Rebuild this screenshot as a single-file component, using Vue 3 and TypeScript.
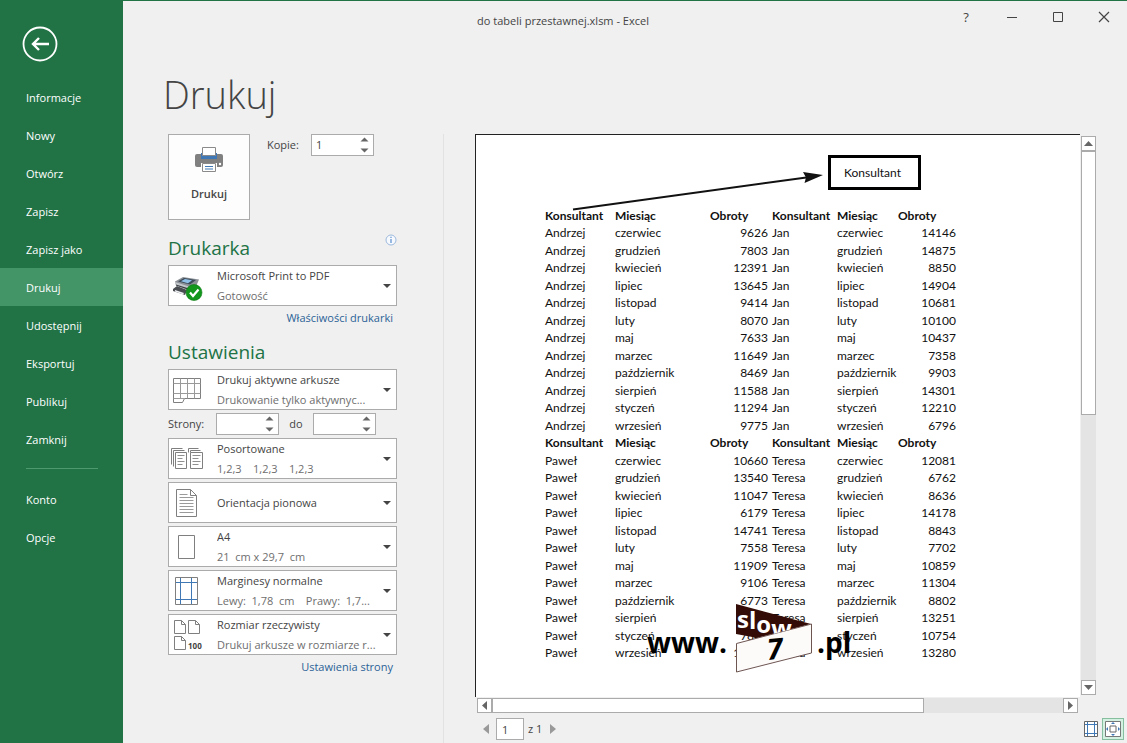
<script setup lang="ts">
import { ref } from 'vue'

type Row = [string, string, string, string, string, string]

const topNav = ['Informacje', 'Nowy', 'Otwórz', 'Zapisz', 'Zapisz jako', 'Drukuj', 'Udostępnij', 'Eksportuj', 'Publikuj', 'Zamknij']
const bottomNav = ['Konto', 'Opcje']
const active = ref('Drukuj')

const copies = ref('1')
const pageFrom = ref('')
const pageTo = ref('')
const currentPage = ref('1')

interface Combo {
  id: string
  label: string
  title: string
  sub: string
}

const sheetCombo: Combo = { id: 'sheets', label: 'Zakres wydruku', title: 'Drukuj aktywne arkusze', sub: 'Drukowanie tylko aktywnyc...' }
const layoutCombos: Combo[] = [
  { id: 'collate', label: 'Sortowanie', title: 'Posortowane', sub: '1,2,3    1,2,3    1,2,3' },
  { id: 'orient', label: 'Orientacja', title: 'Orientacja pionowa', sub: '' },
  { id: 'paper', label: 'Rozmiar papieru', title: 'A4', sub: '21  cm x 29,7  cm' },
  { id: 'margins', label: 'Marginesy', title: 'Marginesy normalne', sub: 'Lewy:  1,78  cm    Prawy:  1,7...' },
  { id: 'scale', label: 'Skalowanie', title: 'Rozmiar rzeczywisty', sub: 'Drukuj arkusze w rozmiarze r...' },
]

const months = ['czerwiec', 'grudzień', 'kwiecień', 'lipiec', 'listopad', 'luty', 'maj', 'marzec', 'październik', 'sierpień', 'styczeń', 'wrzesień']

function block(left: string, a: number[], right: string, b: number[]): Row[] {
  return months.map((m, i): Row => [left, m, String(a[i]), right, m, String(b[i])])
}

const blocks: Row[][] = [
  block('Andrzej', [9626, 7803, 12391, 13645, 9414, 8070, 7633, 11649, 8469, 11588, 11294, 9775],
    'Jan', [14146, 14875, 8850, 14904, 10681, 10100, 10437, 7358, 9903, 14301, 12210, 6796]),
  block('Paweł', [10660, 13540, 11047, 6179, 14741, 7558, 11909, 9106, 6773, 9120, 7845, 12043],
    'Teresa', [12081, 6762, 8636, 14178, 8843, 7702, 10859, 11304, 8802, 13251, 10754, 13280]),
]
const heads = ['Konsultant', 'Miesiąc', 'Obroty', 'Konsultant', 'Miesiąc', 'Obroty']
</script>

<template>
  <div class="app">
    <aside class="side">
      <button class="back" aria-label="Wstecz">
        <svg width="36" height="36" viewBox="0 0 36 36" fill="none" stroke="#fff">
          <circle cx="18" cy="18" r="16.5" stroke-width="1.8" />
          <path d="M27 18H11M17 12l-6 6 6 6" stroke-width="2.4" />
        </svg>
      </button>
      <nav>
        <button v-for="n in topNav" :key="n" class="nav" :class="{ on: n === active }" @click="active = n">{{ n }}</button>
        <hr class="rule" />
        <button v-for="n in bottomNav" :key="n" class="nav">{{ n }}</button>
      </nav>
    </aside>

    <main class="main">
      <header class="bar">
        <span class="doc">do tabeli przestawnej.xlsm - Excel</span>
        <div class="win">
          <button class="help" aria-label="Pomoc">?</button>
          <button aria-label="Minimalizuj"><svg width="12" height="12" viewBox="0 0 12 12"><path d="M1 6.5h10" stroke="#444" /></svg></button>
          <button aria-label="Maksymalizuj"><svg width="12" height="12" viewBox="0 0 12 12"><path d="M1.500 1.500h9v9h-9z" fill="none" stroke="#444" /></svg></button>
          <button aria-label="Zamknij"><svg width="12" height="12" viewBox="0 0 12 12"><path d="M1 1l10 10M11 1L1 11" stroke="#444" stroke-width="1.200" /></svg></button>
        </div>
      </header>

      <h1>Drukuj</h1>

      <div class="cols">
        <section class="settings">
          <div class="top">
            <button class="print">
              <svg width="30" height="26" viewBox="0 0 30 26">
                <path d="M3 7h24q2 0 2 2v9q0 2-2 2H3q-2 0-2-2V9q0-2 2-2z" fill="#808080" />
                <path d="M7 6h16v6H7z" fill="#3f78b5" />
                <path d="M8.500 .5h13v8h-13z" fill="#fff" stroke="#8a8a8a" />
                <path d="M7 16h16v10H7z" fill="#fff" />
                <path d="M8.500 16.500h13v8h-13z" fill="#fff" stroke="#8a8a8a" />
                <path d="M11 19.500h8M11 22h8" stroke="#3f78b5" stroke-width="1.200" />
                <circle cx="26" cy="17" r="1.200" fill="#fff" />
              </svg>
              <span>Drukuj</span>
            </button>
            <label class="copies" for="copies">Kopie:</label>
            <div class="spin">
              <input id="copies" v-model="copies" type="text" />
              <svg width="9" height="16" viewBox="0 0 9 16" fill="#666"><path d="M.5 4.500l4-4 4 4zM.5 11.500l4 4 4-4z" /></svg>
            </div>
          </div>

          <div class="head">
            <h2>Drukarka</h2>
            <svg width="12" height="12" viewBox="0 0 12 12"><circle cx="6" cy="6" r="5" fill="#f6f9fd" stroke="#9db9dd" /><path d="M6 5v4M6 2.800v1.200" stroke="#5b8fd0" stroke-width="1.200" /></svg>
          </div>

          <div class="combo">
            <svg class="ico" width="32" height="32" viewBox="0 0 32 32">
              <path d="M2 19l4-3 10 4-2 5-12-4z" fill="#4a4e52" />
              <path d="M4 20l9 3-1 1.500-8-3z" fill="#eef0f2" />
              <path d="M4 11.500L12 7l16 2.500-3 7-7 4-13-5z" fill="#8b9197" />
              <path d="M7 11.500l6-3.500 12 2-6 4.500z" fill="#3d4a57" />
              <path d="M10 11.300l4-2.300 7 1.200-4 3z" fill="#8fc0e8" />
              <path d="M4 12l14 4.500v3.500L5 15.500z" fill="#c3c8cc" />
              <path d="M5 14.500l13 4v1.500l-13-4.500z" fill="#3a3e42" />
              <circle cx="23" cy="22.500" r="8" fill="#12961b" stroke="#0b7a14" stroke-width=".6" />
              <path d="M19 22.500l3 3.500 5.500-6.500" fill="none" stroke="#fff" stroke-width="2.200" />
            </svg>
            <div class="txt">
              <select aria-label="Drukarka"><option>Microsoft Print to PDF</option></select>
              <span>Gotowość</span>
            </div>
            <svg class="arr" width="8" height="4" viewBox="0 0 8 4"><path d="M0 0h8L4 4z" fill="#444" /></svg>
          </div>
          <a class="link" href="#">Właściwości drukarki</a>

          <h2 class="second">Ustawienia</h2>

          <div class="combo">
            <svg class="ico" width="32" height="32" viewBox="0 0 32 32" fill="none" stroke="#7f7f7f">
              <path d="M2.500 4.500h27v20h-16l-2 4h-9z" fill="#fff" />
              <path d="M9.500 4.500v20M16.500 4.500v20M23.500 4.500v20M2.500 9.500h27M2.500 19.500h27M2.500 24.500h11" stroke="#9a9a9a" />
            </svg>
            <div class="txt">
              <select :aria-label="sheetCombo.label"><option>{{ sheetCombo.title }}</option></select>
              <span>{{ sheetCombo.sub }}</span>
            </div>
            <svg class="arr" width="8" height="4" viewBox="0 0 8 4"><path d="M0 0h8L4 4z" fill="#444" /></svg>
          </div>

          <div class="pages">
            <label for="from">Strony:</label>
            <div class="spin">
              <input id="from" v-model="pageFrom" type="text" />
              <svg width="9" height="16" viewBox="0 0 9 16" fill="#666"><path d="M.5 4.500l4-4 4 4zM.5 11.500l4 4 4-4z" /></svg>
            </div>
            <label class="to" for="to">do</label>
            <div class="spin">
              <input id="to" v-model="pageTo" type="text" />
              <svg width="9" height="16" viewBox="0 0 9 16" fill="#666"><path d="M.5 4.500l4-4 4 4zM.5 11.500l4 4 4-4z" /></svg>
            </div>
          </div>

          <div class="stack">
            <div v-for="c in layoutCombos" :key="c.id" class="combo">
              <svg class="ico" width="32" height="32" viewBox="0 0 32 32" fill="none" stroke="#7f7f7f">
                <template v-if="c.id === 'collate'">
                  <path d="M.5 21.500v-16h11M2.500 23.500v-16h11M17.500 9.500v-4h10M19.500 9.500v-2h10" />
                  <path d="M4.500 9.500h11v16h-11zM19.500 9.500h12v16h-12z" fill="#fff" />
                  <path d="M6.500 12.500h7M6.500 15.500h5M6.500 18.500h7M6.500 21.500h5M21.500 12.500h8M21.500 15.500h6M21.500 18.500h8M21.500 21.500h6" stroke="#909090" />
                </template>
                <template v-else-if="c.id === 'orient'">
                  <path d="M5.500 2.500h14l6 6v21h-20zM19.500 2.500v6h6" />
                  <path d="M8.500 7.500h8M8.500 10.500h14M8.500 13.500h14M8.500 16.500h14M8.500 19.500h14M8.500 22.500h14M8.500 25.500h14" stroke="#9a9a9a" />
                </template>
                <path v-else-if="c.id === 'paper'" d="M7.500 4.500h16v23h-16z" />
                <template v-else-if="c.id === 'margins'">
                  <path d="M4.500 2.500h22v27h-22z" />
                  <path d="M9.500 3v26M20.500 3v26M5 7.500h21M5 24.500h21" stroke="#3f78b5" />
                </template>
                <template v-else>
                  <path d="M3.500 1.500h7l4 4v9h-11zM10.500 1.500v4h4M17.500 1.500h7l4 4v9h-11zM24.500 1.500v4h4M3.500 17.500h7l4 4v9h-11zM10.500 17.500v4h4" />
                  <text x="17" y="30" class="hundred">100</text>
                </template>
              </svg>
              <div class="txt">
                <select :aria-label="c.label"><option>{{ c.title }}</option></select>
                <span v-if="c.sub">{{ c.sub }}</span>
              </div>
              <svg class="arr" width="8" height="4" viewBox="0 0 8 4"><path d="M0 0h8L4 4z" fill="#444" /></svg>
            </div>
          </div>
          <a class="link" href="#">Ustawienia strony</a>
        </section>

        <section class="preview">
          <div class="sheet">
            <svg class="shape arrow" width="252" height="42" viewBox="0 0 252 42">
              <path d="M1 38.500L238 6" stroke="#111" stroke-width="2" />
              <path d="M251 4L231 1l3 5.500-1.500 5.500z" fill="#111" />
            </svg>
            <div class="shape callout">Konsultant</div>
            <table>
              <colgroup>
                <col class="c1" /><col class="c2" /><col class="c3" /><col class="c4" /><col class="c5" /><col class="c6" />
              </colgroup>
              <tbody v-for="(b, i) in blocks" :key="i">
                <tr><th v-for="(h, j) in heads" :key="j" scope="col">{{ h }}</th></tr>
                <tr v-for="(r, k) in b" :key="k"><td v-for="(v, j) in r" :key="j">{{ v }}</td></tr>
              </tbody>
            </table>
            <svg class="shape mark" width="210" height="76" viewBox="0 0 210 76">
              <defs><clipPath id="flag"><path d="M90 3l75 20-53 14-22-4z" /></clipPath></defs>
              <path d="M90 3l75 20-53 14-22-4z" fill="#330b07" />
              <path d="M90.500 42.500L165.500 23v29L90.500 71z" fill="#fdfafa" stroke="#6d5552" />
              <g clip-path="url(#flag)"><text class="slow" x="91" y="27 28 32 36">slow</text></g>
              <text class="seven" transform="translate(122 59) rotate(-6)">7</text>
              <text class="www" x="1" y="52">www.</text>
              <text class="www" x="171" y="52">.pl</text>
            </svg>
          </div>
          <div class="vbar">
            <button aria-label="W górę"><svg width="9" height="5" viewBox="0 0 9 5"><path d="M0 5l4.500-5L9 5z" fill="#666" /></svg></button>
            <div class="vthumb"></div>
            <div class="vrest"></div>
            <button aria-label="W dół"><svg width="9" height="5" viewBox="0 0 9 5"><path d="M0 0h9L4.500 5z" fill="#666" /></svg></button>
          </div>
          <div class="hbar">
            <button aria-label="W lewo"><svg width="5" height="9" viewBox="0 0 5 9"><path d="M5 0v9L0 4.500z" fill="#666" /></svg></button>
            <div class="hthumb"></div>
            <div class="hrest"></div>
            <button aria-label="W prawo"><svg width="5" height="9" viewBox="0 0 5 9"><path d="M0 0v9l5-4.500z" fill="#666" /></svg></button>
          </div>
          <footer>
            <button class="pg" aria-label="Poprzednia strona"><svg width="6" height="10" viewBox="0 0 6 10"><path d="M6 0v10L0 5z" fill="#999" /></svg></button>
            <input v-model="currentPage" class="page" type="text" aria-label="Strona" />
            <span>z 1</span>
            <button class="pg" aria-label="Następna strona"><svg width="6" height="10" viewBox="0 0 6 10"><path d="M0 0v10l6-5z" fill="#999" /></svg></button>
            <div class="tools">
              <button aria-label="Pokaż marginesy">
                <svg width="14" height="16" viewBox="0 0 14 16" fill="none"><path d="M.5 .5h13v15H.5z" fill="#fff" stroke="#666" /><path d="M3.500 1v14M10.500 1v14M1 3.500h12M1 12.500h12" stroke="#3f78b5" /></svg>
              </button>
              <button class="zoomed" aria-label="Powiększ do strony">
                <svg width="16" height="16" viewBox="0 0 16 16" fill="none"><path d="M.5 .5h15v15H.5z" fill="#fff" stroke="#777" /><path d="M5 5h6v6H5z" stroke="#666" /><path d="M8 1v2M8 13v2M1 8h2M13 8h2M6.500 2.500h3M6.500 13.500h3M2.500 6.500v3M13.500 6.500v3" stroke="#3f78b5" /></svg>
              </button>
            </div>
          </footer>
        </section>
      </div>
    </main>
  </div>
</template>

<style>
body {
  margin: 0;
  background: #f0f0f0;
}
</style>

<style scoped>
* {
  box-sizing: border-box;
}
.app {
  display: flex;
  height: 100vh;
  min-height: 700px;
  border-top: 1px solid #217346;
  background: #f0f0f0;
  color: #444;
  font: 11px/20px "Open Sans", "Noto Sans", sans-serif;
}
button,
input,
select {
  font: inherit;
  color: inherit;
  margin: 0;
  padding: 0;
  border: 0;
  background: none;
  border-radius: 0;
}
svg {
  display: block;
  flex: none;
}
.side {
  width: 123px;
  flex: none;
  background: #217346;
  color: #fff;
}
.back {
  display: block;
  margin: 25px 0 16px 22px;
}
.nav {
  display: block;
  width: 100%;
  height: 38px;
  padding: 1px 0 0 26px;
  text-align: left;
}
.nav.on {
  background: #439467;
}
.rule {
  height: 1px;
  margin: 10px 25px 11px 26px;
  border: 0;
  background: #4d9a70;
}
.main {
  flex: 1;
  min-width: 0;
  display: flex;
  flex-direction: column;
}
.bar {
  display: flex;
  justify-content: center;
  align-items: flex-start;
  height: 66px;
  padding-left: 60px;
}
.doc {
  flex: 1;
  text-align: center;
  padding-top: 10px;
}
.win {
  display: flex;
}
.win button {
  width: 46px;
  height: 31px;
  display: grid;
  place-items: center;
}
.win .help {
  font-size: 13px;
}
h1 {
  margin: 0 0 13px 40px;
  font-size: 38px;
  line-height: 54px;
  font-weight: 300;
}
.cols {
  flex: 1;
  min-height: 0;
  display: flex;
  padding-left: 45px;
}
.settings {
  width: 229px;
  flex: none;
}
.top {
  display: flex;
  align-items: flex-start;
}
.print {
  width: 82px;
  height: 86px;
  border: 1px solid #ababab;
  background: #fdfdfd;
  display: flex;
  flex-direction: column;
  align-items: center;
  gap: 11px;
  justify-content: center;
  padding-bottom: 3px;
  font-weight: 600;
}
.copies {
  width: 44px;
  margin: 1px 0 0 17px;
}
.spin {
  width: 63px;
  height: 22px;
  border: 1px solid #ababab;
  background: #fff;
  display: flex;
  align-items: center;
  padding: 0 4px;
}
.spin input {
  flex: 1;
  min-width: 0;
}
.head {
  display: flex;
  justify-content: space-between;
  margin-top: 14px;
}
h2 {
  margin: 0;
  font-size: 19px;
  line-height: 28px;
  font-weight: 400;
  color: #217346;
}
.head h2 {
  height: 31px;
}
.second {
  margin-top: 10px;
  height: 31px;
}
.combo {
  height: 41px;
  border: 1px solid #ababab;
  background: #fff;
  display: flex;
  align-items: center;
  padding: 0 5px 0 2px;
}
.txt {
  flex: 1;
  min-width: 0;
  display: flex;
  flex-direction: column;
  margin-left: 14px;
}
.txt select {
  appearance: none;
  height: 20px;
  text-overflow: ellipsis;
}
.txt span {
  white-space: pre;
  color: #6e6e6e;
}
.link {
  display: block;
  text-align: right;
  padding: 2px 4px 0 0;
  color: #2b6297;
  text-decoration: none;
}
.pages {
  display: flex;
  align-items: center;
  height: 28px;
}
.pages label {
  width: 48px;
}
.pages .to {
  width: 34px;
  text-align: center;
}
.stack {
  display: grid;
  grid-template-columns: minmax(0, 1fr);
  gap: 3px;
}
.hundred {
  font: 700 8px "Open Sans", sans-serif;
  fill: #444;
  stroke: none;
}
.preview {
  flex: 1;
  min-width: 0;
  margin-left: 46px;
  padding: 0 31px 0 31px;
  border-left: 1px solid #e2e2e2;
  display: grid;
  grid-template-columns: 1fr 16px;
  grid-template-rows: 1fr 16px 30px;
}
.sheet {
  position: relative;
  overflow: hidden;
  background: #fff;
  border-top: 1px solid #222;
  border-left: 1px solid #222;
  padding: 72px 0 0 69px;
  color: #111;
}
table {
  width: 411px;
  height: 455px;
  table-layout: fixed;
  border-collapse: collapse;
  font: 12px/16px Lato, "Open Sans", sans-serif;
}
.c1 { width: 70px; }
.c2 { width: 95px; }
.c3 { width: 62px; }
.c4 { width: 65px; }
.c5 { width: 61px; }
.c6 { width: 58px; }
th,
td {
  padding: 0;
  text-align: left;
  white-space: nowrap;
}
td:nth-child(5) {
  overflow: hidden;
}
td:nth-child(3),
td:nth-child(6) {
  text-align: right;
}
td:nth-child(3) {
  padding-right: 4px;
}
.shape {
  position: absolute;
}
.arrow {
  left: 96px;
  top: 36px;
}
.callout {
  left: 352px;
  top: 20px;
  width: 93px;
  height: 35px;
  border: 3px solid #000;
  display: grid;
  place-items: center;
  padding-right: 4px;
  font: 12px/16px Lato, "Open Sans", sans-serif;
}
.mark {
  left: 170px;
  top: 466px;
}
.slow {
  font: 700 24px "Open Sans", sans-serif;
  fill: #fff;
}
.seven {
  font: italic 700 29px "Open Sans", sans-serif;
}
.www {
  font: 700 28px "Open Sans", sans-serif;
}
.vbar {
  display: flex;
  flex-direction: column;
  padding: 2px 0 2px 1px;
}
.vbar button,
.hbar button {
  width: 15px;
  height: 15px;
  flex: none;
  border: 1px solid #ababab;
  background: #fff;
  display: grid;
  place-items: center;
}
.vthumb {
  flex: 262;
  border: 1px solid #ababab;
  background: #fff;
}
.vrest {
  flex: 266;
  background: #e4e4e4;
}
.hbar {
  grid-column: 1;
  display: flex;
  padding: 1px 2px 0;
}
.hthumb {
  flex: 432;
  border: 1px solid #ababab;
  background: #fff;
}
.hrest {
  flex: 139;
  background: #e4e4e4;
}
footer {
  grid-column: 1 / -1;
  display: flex;
  align-items: center;
  padding-top: 2px;
  margin-right: -28px;
}
.pg {
  width: 21px;
  display: grid;
  place-items: center;
}
.page {
  width: 28px;
  height: 22px;
  border: 1px solid #ababab;
  background: #fff;
  padding: 0 5px;
  margin-right: 4px;
}
.tools {
  margin-left: auto;
  display: flex;
  align-items: center;
}
.tools button {
  height: 22px;
  width: 22px;
  display: grid;
  place-items: center;
}
.tools .zoomed {
  background: #d3f0e0;
  border: 1px solid #86bfa0;
}
</style>
